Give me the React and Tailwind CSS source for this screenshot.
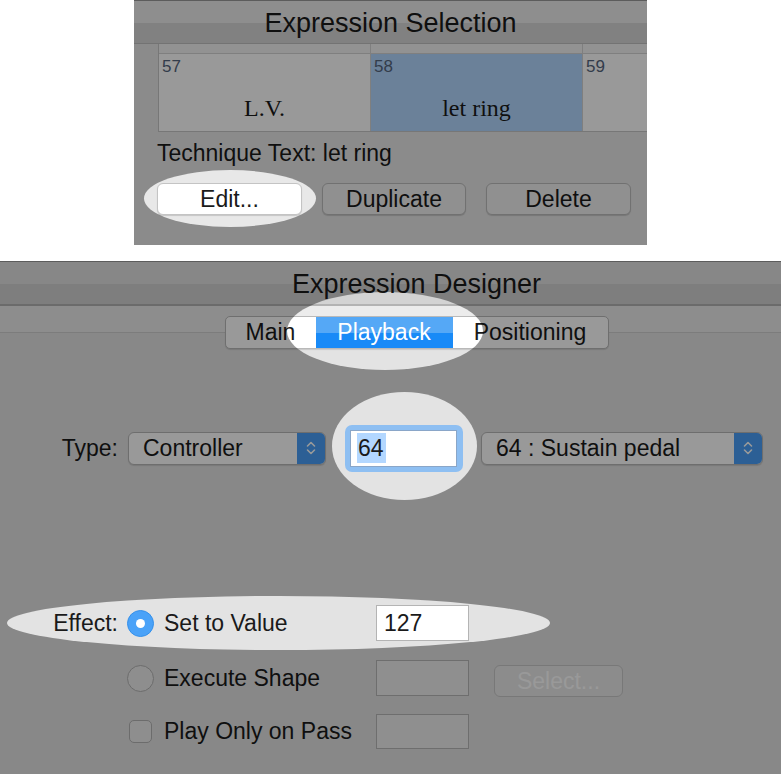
import React from "react";

function Dim({ id, w, h, ellipses }) {
  return (
    <svg className="absolute left-0 top-0 z-20 pointer-events-none" width={w} height={h}>
      <defs>
        <mask id={id}>
          <rect width={w} height={h} fill="white" />
          {ellipses.map((e, i) => (
            <ellipse key={i} cx={e[0]} cy={e[1]} rx={e[2]} ry={e[3]} fill="black" />
          ))}
        </mask>
      </defs>
      <rect width={w} height={h} fill="black" fillOpacity="0.4" mask={`url(#${id})`} />
    </svg>
  );
}

function Stepper() {
  return (
    <div className="w-[28px] h-full bg-[#4a9ff8] flex items-center justify-center">
      <svg width="12" height="20" viewBox="0 0 12 20">
        <path d="M2.5 8 L6 4.5 L9.5 8" fill="none" stroke="white" strokeWidth="1.6" strokeLinecap="round" strokeLinejoin="round" />
        <path d="M2.5 12 L6 15.5 L9.5 12" fill="none" stroke="white" strokeWidth="1.6" strokeLinecap="round" strokeLinejoin="round" />
      </svg>
    </div>
  );
}

function Popup({ width, children }) {
  return (
    <div
      className="h-[33px] flex items-stretch bg-white border border-[#b8b8b8] rounded-[6px] overflow-hidden shadow-[0_1px_1px_rgba(0,0,0,0.12)]"
      style={{ width }}
    >
      <div className="flex-1 flex items-center pl-[14px] text-[23px] leading-none">{children}</div>
      <Stepper />
    </div>
  );
}

function Cell({ num, text, selected }) {
  return (
    <div className={`h-[77px] flex flex-col ${selected ? "bg-[#b3d7ff]" : "bg-white"}`}>
      <div className="pt-[4px] pl-[3px] text-[17px] leading-none text-[#56667e]">{num}</div>
      <div className="mt-[21px] text-center text-[24px] leading-none font-['Liberation_Serif',serif] text-[#1a1a1a]">
        {text}
      </div>
    </div>
  );
}

export default function App() {
  return (
    <div className="w-[781px] h-[774px] bg-white font-['Liberation_Sans',Arial,sans-serif] text-[#1a1a1a] overflow-hidden">
      {/* Top panel */}
      <div className="relative mx-auto w-[513px] h-[245px] overflow-hidden bg-[#e8e8e8]">
        <div className="h-[44px] border-t border-t-[#9a9a9a] border-b border-b-[#c0c0c0] bg-[linear-gradient(#ededed_0,#ededed_22px,#d8d8d8_22px)] flex items-center justify-center pt-[3px] text-[27px] leading-none">
          Expression Selection
        </div>
        <div className="ml-[24px] flex border-l border-b border-[#c6c6c6] w-[520px]">
          <div className="w-[212px] shrink-0 border-r border-[#d4d4d4]">
            <div className="h-[10px] bg-[#f4f4f4] border-b border-[#d4d4d4]" />
            <Cell num="57" text="L.V." />
          </div>
          <div className="w-[212px] shrink-0 border-r border-[#d4d4d4]">
            <div className="h-[10px] bg-[#f4f4f4] border-b border-[#d4d4d4]" />
            <Cell num="58" text="let ring" selected />
          </div>
          <div className="w-[212px] shrink-0">
            <div className="h-[10px] bg-[#f4f4f4] border-b border-[#d4d4d4]" />
            <Cell num="59" text="" />
          </div>
        </div>
        <div className="ml-[23px] mt-[10px] text-[23px] leading-none">Technique Text: let ring</div>
        <div className="ml-[23px] mt-[18px] flex gap-[20px]">
          <div className="w-[145px] h-[32px] bg-white border border-[#c4c4c4] rounded-[6px] shadow-[0_1px_1px_rgba(0,0,0,0.15)] flex items-center justify-center text-[23px] leading-none">
            Edit...
          </div>
          <div className="w-[144px] h-[32px] bg-[#f0f0f0] border border-[#bdbdbd] rounded-[6px] shadow-[0_1px_1px_rgba(0,0,0,0.15)] flex items-center justify-center text-[23px] leading-none">
            Duplicate
          </div>
          <div className="w-[145px] h-[32px] bg-[#f0f0f0] border border-[#bdbdbd] rounded-[6px] shadow-[0_1px_1px_rgba(0,0,0,0.15)] flex items-center justify-center text-[23px] leading-none">
            Delete
          </div>
        </div>
        <Dim id="m-top" w={513} h={245} ellipses={[[96, 198.5, 86, 28.5]]} />
      </div>

      {/* Bottom panel */}
      <div className="relative mt-[16px] w-[781px] h-[513px] overflow-hidden bg-[#e3e3e3]">
        <div className="h-[45px] border-t border-t-[#9a9a9a] border-b-2 border-b-[#b3b3b3] bg-[linear-gradient(#e2e2e2_0,#e2e2e2_22px,#d3d3d3_22px)] flex items-center justify-center pl-[52px] pt-[3px] text-[27px] leading-none">
          Expression Designer
        </div>
        <div className="h-[26px] bg-[#ececec]">
          <div className="flex justify-center pl-[52px] pt-[10px]">
            <div className="relative z-10 flex h-[33px] w-[384px] bg-white border border-[#b9b9b9] rounded-[5px] overflow-hidden shadow-[0_1px_1px_rgba(0,0,0,0.12)] text-[23px] leading-none">
              <div className="w-[90px] flex items-center justify-center">Main</div>
              <div className="w-[137px] flex items-center justify-center text-white bg-[linear-gradient(#55a8f6_0,#55a8f6_50%,#188af7_50%)]">
                Playback
              </div>
              <div className="flex-1 flex items-center justify-center">Positioning</div>
            </div>
          </div>
        </div>
        <div className="border-t border-[#cfcfcf]">
          {/* Type row */}
          <div className="mt-[91px] h-[48px] flex items-center">
            <div className="w-[118px] text-right text-[23px] leading-none">Type:</div>
            <div className="ml-[10px]">
              <Popup width={198}>Controller</Popup>
            </div>
            <div className="ml-[19px] w-[118px] h-[47px] rounded-[7px] bg-[#8ebff2] p-[5px] pr-[6px]">
              <div className="w-full h-full bg-white border border-[#8aa6c8] flex items-center pl-[6px] text-[23px]">
                <span className="bg-[#b3d7ff] leading-[30px] pl-[1px] pr-[2px]">64</span>
              </div>
            </div>
            <div className="ml-[18px]">
              <Popup width={282}>64 : Sustain pedal</Popup>
            </div>
          </div>

          {/* Effect row */}
          <div className="mt-[133px] h-[36px] flex items-center">
            <div className="w-[118px] text-right text-[23px] leading-none">Effect:</div>
            <div className="ml-[9px] w-[27px] h-[27px] rounded-full bg-[#4aa2f8] border border-[#3590ea] flex items-center justify-center">
              <div className="w-[9px] h-[9px] rounded-full bg-white" />
            </div>
            <div className="ml-[10px] w-[212px] text-[23px] leading-none">Set to Value</div>
            <div className="w-[93px] h-[36px] bg-white border border-[#b4b4b4] flex items-center pl-[7px] text-[23px] leading-none">
              127
            </div>
          </div>

          {/* Execute Shape row */}
          <div className="mt-[19px] h-[36px] flex items-center">
            <div className="w-[118px]" />
            <div className="ml-[9px] w-[27px] h-[27px] rounded-full bg-[#ededed] border border-[#b4b4b4]" />
            <div className="ml-[10px] w-[212px] text-[23px] leading-none">Execute Shape</div>
            <div className="w-[93px] h-[36px] bg-[#eeeeee] border border-[#b8b8b8]" />
            <div className="ml-[25px] w-[129px] h-[32px] mt-[6px] bg-[#e9e9e9] border border-[#c8c8c8] rounded-[6px] flex items-center justify-center text-[23px] leading-none text-white">
              Select...
            </div>
          </div>

          {/* Play Only on Pass row */}
          <div className="mt-[18px] h-[35px] flex items-center">
            <div className="w-[118px]" />
            <div className="ml-[11px] w-[23px] h-[23px] rounded-[5px] bg-[#ededed] border border-[#b4b4b4]" />
            <div className="ml-[12px] w-[212px] text-[23px] leading-none">Play Only on Pass</div>
            <div className="w-[93px] h-[35px] bg-[#eeeeee] border border-[#b8b8b8]" />
          </div>
        </div>
        <Dim
          id="m-bottom"
          w={781}
          h={513}
          ellipses={[
            [385, 70, 98, 39],
            [404.5, 185, 72.5, 54],
            [278.5, 362, 271.5, 27],
          ]}
        />
      </div>
    </div>
  );
}
